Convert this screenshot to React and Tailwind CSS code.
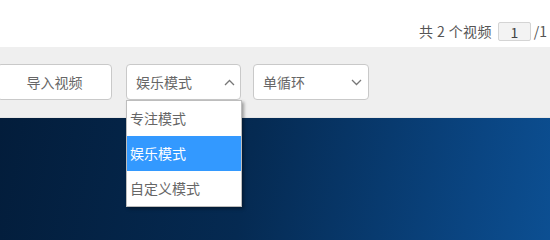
import React from "react";

const FONT = "font-['Microsoft_YaHei','Noto_Sans_CJK_SC',sans-serif]";

function Chevron({ up }) {
  return (
    <svg width="11" height="7" viewBox="0 0 11 7" className="shrink-0">
      <path
        d={up ? "M1 6 L5.5 1.5 L10 6" : "M1 1 L5.5 5.5 L10 1"}
        fill="none"
        stroke="#777"
        strokeWidth="1.3"
      />
    </svg>
  );
}

const MODES = ["专注模式", "娱乐模式", "自定义模式"];

export default function App() {
  const active = "娱乐模式";

  return (
    <div className={`w-[550px] h-[240px] overflow-hidden flex flex-col text-[14px] text-[#666] ${FONT}`}>
      {/* header */}
      <div className="h-[47px] bg-white flex items-start pt-[22px] pl-[419px] whitespace-nowrap shrink-0 overflow-hidden">
        <span className="shrink-0 leading-[19px] text-[#555] tracking-[0.4px]">共 2 个视频</span>
        <div className="shrink-0 ml-[6px] w-[33px] h-[19px] border border-[#d4d4d4] bg-[#f3f3f3] rounded-[2px] flex items-center justify-center leading-none text-[#444]">
          1
        </div>
        <span className="shrink-0 ml-[3px] leading-[19px] text-[#555]">/1 页</span>
      </div>

      {/* toolbar */}
      <div className="h-[70px] bg-[#efefef] flex items-start pt-[17px] shrink-0 relative z-10">
        <button className="-ml-[3px] w-[115px] h-[36px] bg-white border border-[#c9c9c9] rounded-[4px] text-[#666]">
          导入视频
        </button>

        <div className="relative ml-[14px]">
          <div className="w-[115px] h-[36px] bg-white border border-[#c9c9c9] rounded-[4px] flex items-center justify-between pl-[9px] pr-[5px]">
            <span>娱乐模式</span>
            <Chevron up />
          </div>
          <div className="absolute left-0 top-full w-[116px] bg-white border border-[#bdbdbd] shadow-[2px_2px_3px_rgba(0,0,0,0.35)] flex flex-col">
            {MODES.map((m) => (
              <div
                key={m}
                className={`h-[35px] flex items-center pl-[3px] ${
                  m === active ? "bg-[#3399ff] text-white" : "text-[#666]"
                }`}
              >
                {m}
              </div>
            ))}
          </div>
        </div>

        <div className="ml-[12px] w-[116px] h-[36px] bg-white border border-[#c9c9c9] rounded-[4px] flex items-center justify-between pl-[9px] pr-[6px]">
          <span>单循环</span>
          <Chevron />
        </div>
      </div>

      {/* desktop area */}
      <div className="flex-1 border-t border-[#e6e6e6] bg-[linear-gradient(100deg,#031d3b_0%,#052a52_45%,#0a4582_85%,#0c4f92_100%)]" />
    </div>
  );
}
